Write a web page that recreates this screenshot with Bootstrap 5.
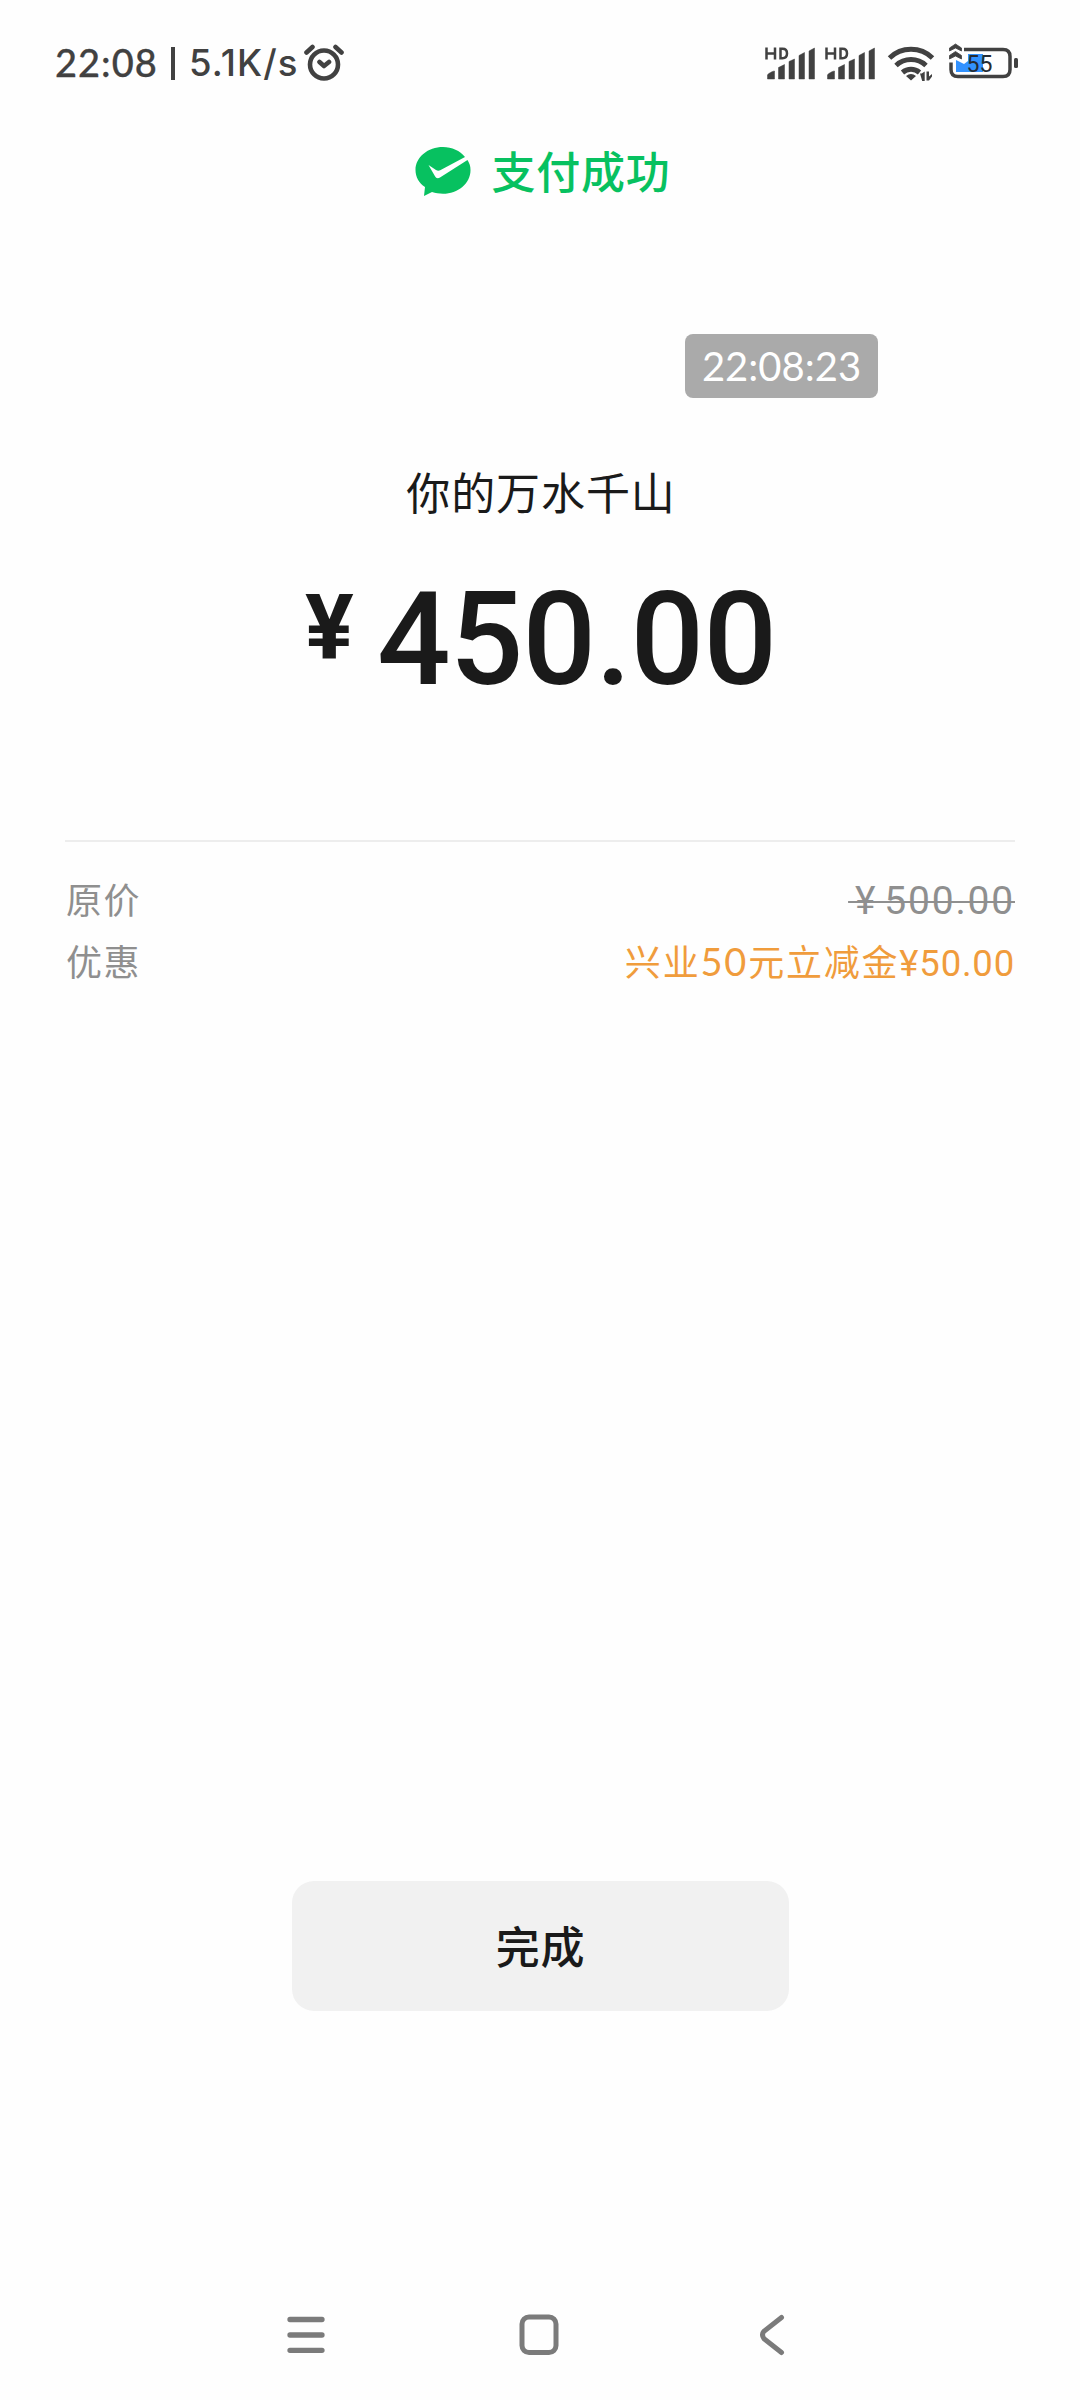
<!DOCTYPE html>
<html lang="zh-CN">
<head>
<meta charset="utf-8">
<meta name="viewport" content="width=device-width, initial-scale=1">
<title>支付成功</title>
<link href="https://cdn.jsdelivr.net/npm/bootstrap@5.3.0/dist/css/bootstrap.min.css" rel="stylesheet">
<style>
body{background:#fefefe;color:#1a1a1a;font-family:"Noto Sans CJK SC",sans-serif}
.pay-screen{width:1080px;height:2400px;overflow:hidden}
svg{display:block;flex:none}
.status-bar{height:126px;padding:0 62px 0 55px;color:#414141}
.status-text{font:500 38px/124px Lato,sans-serif;white-space:nowrap;-webkit-text-stroke:.3px #414141}
.st-clock{width:104px;letter-spacing:1px;padding-bottom:2px}
.st-rate{font-family:Inter,sans-serif;font-size:36.5px;letter-spacing:1.1px;width:115px;-webkit-text-stroke:0}
.st-line{width:4px;height:33px;background:#414141;margin:0 14px 0 12px}
.result-head{height:94px;gap:20px;color:#07c160;padding-left:5px}
.result-head svg{margin-bottom:2px}
.result-text{font-size:44px;font-weight:500;letter-spacing:.7px;line-height:88px;padding-bottom:6px}
.stamp-row{padding:114px 202px 0 0}
.stamp{width:193px;height:64px;border-radius:8px;background:#aaa;color:#fff;font:400 40px/64px Lato,sans-serif;white-space:nowrap}
.payee{margin-top:61px;height:64px;line-height:64px;font-size:44px;letter-spacing:.9px;padding-left:2px}
.amount{margin-top:53px;height:128px;font-family:Roboto,sans-serif;font-weight:500;padding-left:305px}
.yen{font-size:91px;line-height:105px;width:72px;font-weight:700}
.digits{font-size:129.5px;line-height:128px;letter-spacing:-.8px}
.detail{margin:136px 65px 0;border-top:2px solid #ededed;padding-top:27px;font-size:36px;color:#8f8f8f}
.detail-row{height:61px;line-height:61px;letter-spacing:1.5px}
.detail-row>span:first-child{padding-left:1px}
.detail-row:first-child>span:first-child{margin-top:-1px}
.old-price{font:400 39px/65px Roboto,sans-serif;letter-spacing:1.8px;word-spacing:-4.5px;text-decoration:line-through;text-decoration-thickness:2px;white-space:pre}
.promo{color:#f09c3c;letter-spacing:1.8px}
.promo-fifty{font-family:Lato,sans-serif;font-size:38px}
.promo-sum{font-family:Roboto,sans-serif;font-size:36.5px;letter-spacing:.8px}
.done-btn,.done-btn:hover{width:497px;height:130px;border-radius:22px;border:0;background:#f1f1f1;color:#1a1a1a;font-size:44px;font-weight:500;letter-spacing:.8px;margin:890px 0 0 292px;padding:0 0 2px}
.nav-keys{margin-top:auto;height:130px;padding-left:287px}
.nav-home{margin-left:194px}
.nav-back{margin-left:200px}
</style>
<script src="https://cdn.jsdelivr.net/npm/bootstrap@5.3.0/dist/js/bootstrap.bundle.min.js"></script>
</head>
<body>
<main class="pay-screen d-flex flex-column">
  <header class="status-bar d-flex align-items-center">
    <div class="status-text d-flex align-items-center">
      <span class="st-clock">22:08</span><span class="st-line"></span><span class="st-rate">5.1K/s</span>
    </div>
    <svg width="40" height="40" viewBox="0 0 40 40" fill="none" stroke="currentColor" stroke-width="4.6" stroke-linecap="round">
      <circle cx="20" cy="21.500" r="14"/><path d="M2.500 9.500 8.500 4M37.500 9.500 31.500 4M15.500 19l4.500 4 5-4" stroke-linejoin="round"/>
    </svg>
    <svg class="ms-auto" width="254" height="42" viewBox="764 42 254 42" fill="currentColor">
      <g id="cell">
        <path d="M766.500 47.500v12M775 47.500v12M766.500 53.500h8.500M780.500 48.800h2c3 0 4.500 2 4.500 4.700s-1.500 4.700-4.500 4.700h-2z" fill="none" stroke="currentColor" stroke-width="2.500"/>
        <path d="M767.500 75c0-1 5-4 7-4v8h-7zM778.500 67.500l6-3V79h-6zM789 61.500l5.500-2.500v20H789zM799 55.500l5.500-3V79H799zM809 51l5.500-3v31H809z" stroke="currentColor" stroke-width=".5" stroke-linejoin="round"/>
      </g>
      <use href="#cell" x="60"/>
      <g fill="none" stroke="currentColor" stroke-width="5">
        <path d="M889.500 58a31 31 0 0 1 43 0M896 65.500a22 22 0 0 1 30 0M902.500 72.500a13 13 0 0 1 17 0"/>
      </g>
      <path d="M906 76q5-4 10 0l-5 4.500zM920 73.500h1.700l3-2V81h-2.500zM926.500 71.500h2.500v5l3-2.500v2.500l-3 4h-2.500z"/>
      <path d="M956 60l8 4 4-3v-7h15v18h-27z" fill="#3292ff"/>
      <path d="M964 49.500h39q7 0 7 7v13q0 7-7 7h-45q-7 0-7-7v-7" fill="none" stroke="currentColor" stroke-width="3.500"/>
      <path d="M949.500 51v-3l6-4 6 4v3l-6-3zM949.500 59v-3.500l6-4 6 4V59l-6-3z" stroke="currentColor" stroke-width=".8"/>
      <rect x="1014" y="58" width="4" height="10" rx="1.500"/>
      <text x="966.500" y="71.500" font-family="Roboto,sans-serif" font-size="23" textLength="26" fill="#252b33">55</text>
    </svg>
  </header>

  <section class="result-head d-flex align-items-center justify-content-center">
    <svg width="57" height="52" viewBox="0 0 57 52">
      <path fill="currentColor" d="M28 1C13 1 .5 11 .5 24c0 7 3.500 13 9.500 17L9 50l8-4c3.500 1.200 7 1.700 11 1.700 15 0 27.500-10.300 27.500-23.500 0-4-1-7-3-10.200L25 31.500c-2 1.200-4 .8-5-1.200L13.500 19l7.500 5c1.500 1 2.700 1 4.200.3L50 11C45 4.800 37 1 28 1z"/>
    </svg>
    <span class="result-text">支付成功</span>
  </section>

  <div class="stamp-row d-flex justify-content-end"><div class="stamp text-center">22:08:23</div></div>
  <div class="payee text-center">你的万水千山</div>
  <div class="amount d-flex"><span class="yen">¥</span><span class="digits">450.00</span></div>

  <section class="detail">
    <div class="detail-row d-flex justify-content-between"><span>原价</span><span class="old-price"> ¥ 500.00</span></div>
    <div class="detail-row d-flex justify-content-between"><span>优惠</span><span class="promo">兴业<span class="promo-fifty">50</span>元立减金<span class="promo-sum">¥50.00</span></span></div>
  </section>

  <button class="btn done-btn" type="button">完成</button>

  <nav class="nav-keys d-flex align-items-center">
    <svg width="38" height="42" viewBox="0 0 38 42" stroke="#7b7b7b" stroke-width="5.300" stroke-linecap="round"><path d="M3 5.500h32M3 21h32M3 36.300h32"/></svg>
    <svg class="nav-home" width="40" height="42" viewBox="0 0 40 42" fill="none" stroke="#7b7b7b" stroke-width="5"><rect x="3" y="3" width="34" height="35.500" rx="7"/></svg>
    <svg class="nav-back" width="26" height="42" viewBox="0 0 26 42" fill="none" stroke="#7b7b7b" stroke-width="5" stroke-linecap="round"><path d="M22.500 3.500 5 17.200q-3 3.500 0 7.500L22.500 38.500"/></svg>
  </nav>
</main>
</body>
</html>
